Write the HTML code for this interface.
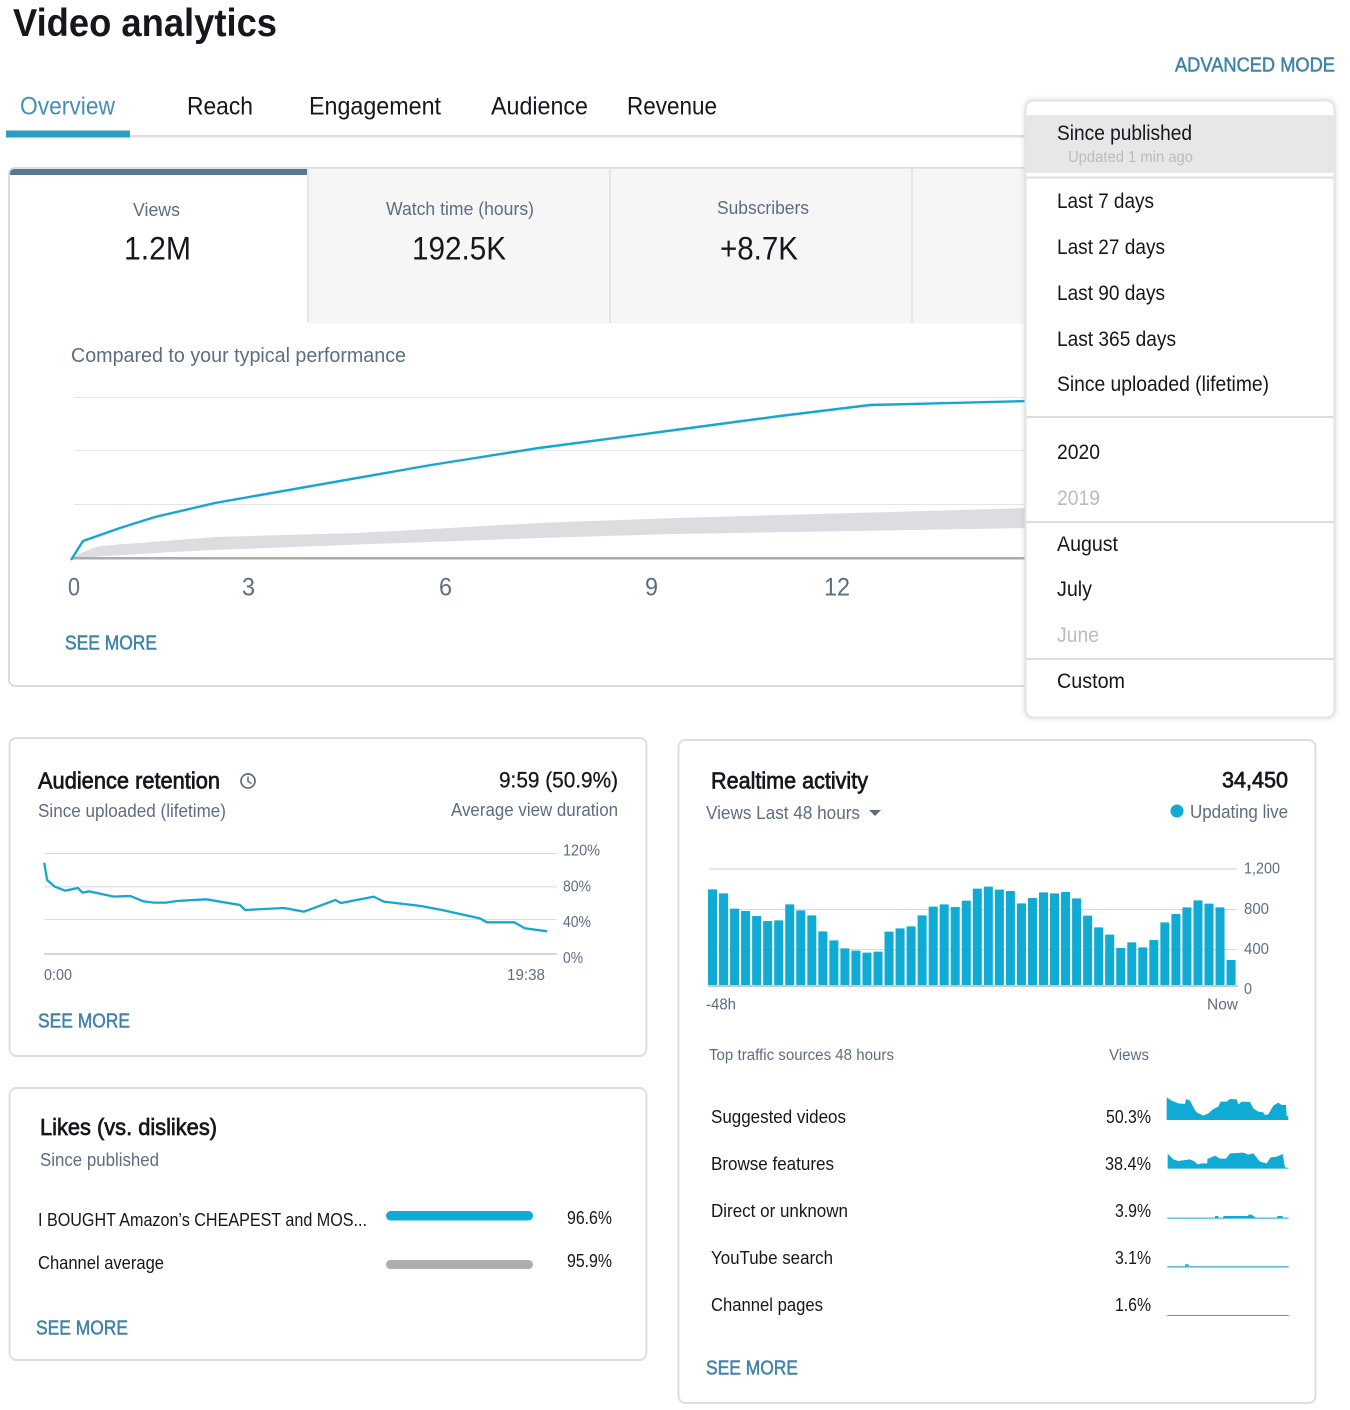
<!DOCTYPE html>
<html lang="en"><head><meta charset="utf-8"><title>Video analytics</title>
<style>
html,body{margin:0;padding:0;background:#fff;width:1350px;height:1410px;overflow:hidden}
svg{display:block;position:absolute;left:0;top:0}
text{font-family:"Liberation Sans",sans-serif}
.g{fill:#5e6c82}.d{fill:#15171c}.l{fill:#bbbcbe}
.a{fill:#3f83a8;stroke:#3f83a8;stroke-width:.5px}
.t{fill:#15171c;stroke:#15171c;stroke-width:.7px}
</style></head><body>
<svg width="1350" height="1410" viewBox="0 0 1350 1410" xmlns="http://www.w3.org/2000/svg">
<defs><filter id="s" x="-5%" y="-5%" width="110%" height="110%"><feGaussianBlur stdDeviation="3"/></filter></defs>
<text x="13" y="36" font-size="39" font-weight="bold" fill="#15171c" textLength="264" lengthAdjust="spacingAndGlyphs">Video analytics</text>
<text class="a" x="1175" y="71.500" font-size="20" textLength="160" lengthAdjust="spacingAndGlyphs">ADVANCED MODE</text>

<rect x="6" y="135" width="1020" height="2.5" fill="#dcdee0"/>
<rect x="6" y="130.500" width="124" height="7" fill="#2f9cc2"/>
<text x="20" y="114.500" font-size="25" fill="#4390b4" textLength="95" lengthAdjust="spacingAndGlyphs">Overview</text>
<text class="d" x="187" y="114.500" font-size="25" textLength="66" lengthAdjust="spacingAndGlyphs">Reach</text>
<text class="d" x="309" y="114.500" font-size="25" textLength="132" lengthAdjust="spacingAndGlyphs">Engagement</text>
<text class="d" x="491" y="114.500" font-size="25" textLength="97" lengthAdjust="spacingAndGlyphs">Audience</text>
<text class="d" x="627" y="114.500" font-size="25" textLength="90" lengthAdjust="spacingAndGlyphs">Revenue</text>

<!-- main card -->
<rect x="9" y="168" width="1040" height="518" rx="6" fill="#fff" stroke="#cfd1d3" stroke-width="1.500"/>
<rect x="308" y="168.500" width="730" height="155" fill="#f6f6f6"/>
<rect x="307" y="168" width="2" height="155" fill="#e6e7e8"/>
<rect x="609" y="168" width="2" height="155" fill="#e3e4e5"/>
<rect x="911" y="168" width="2" height="155" fill="#e3e4e5"/>
<path d="M10 175V174Q10 169 15 169H307V175Z" fill="#56788f"/>
<text class="g" x="133" y="216" font-size="18" textLength="47" lengthAdjust="spacingAndGlyphs">Views</text>
<text class="d" x="124" y="259.500" font-size="32" textLength="67" lengthAdjust="spacingAndGlyphs">1.2M</text>
<text class="g" x="386" y="215" font-size="18" textLength="148" lengthAdjust="spacingAndGlyphs">Watch time (hours)</text>
<text class="d" x="412" y="259.500" font-size="32" textLength="94" lengthAdjust="spacingAndGlyphs">192.5K</text>
<text class="g" x="717" y="214" font-size="18" textLength="92" lengthAdjust="spacingAndGlyphs">Subscribers</text>
<text class="d" x="720" y="259.500" font-size="32" textLength="78" lengthAdjust="spacingAndGlyphs">+8.7K</text>
<text class="g" x="71" y="362" font-size="20" textLength="335" lengthAdjust="spacingAndGlyphs">Compared to your typical performance</text>
<rect x="74" y="397" width="960" height="1" fill="#e4e5e6"/>
<rect x="74" y="450" width="960" height="1" fill="#e6e7e8"/>
<rect x="74" y="504" width="960" height="1" fill="#e4e5e6"/>
<path d="M72 558Q85 550 100 546L215 537 358 533 539 523 675 518 1030 508V528L675 534 539 538 345 545 215 550 172 552 90 557Z" fill="#dcdde0"/>
<rect x="72" y="557" width="960" height="2.500" fill="#a9abad"/>
<polyline points="71,560 83,541 120,528 155,517 215,503 431,465 539,448 675,430 780,416 870,405 1030,401" fill="none" stroke="#16a6d1" stroke-width="2.400"/>
<text class="g" x="68" y="595.500" font-size="25" textLength="12" lengthAdjust="spacingAndGlyphs">0</text>
<text class="g" x="242" y="595.500" font-size="25" textLength="13" lengthAdjust="spacingAndGlyphs">3</text>
<text class="g" x="439" y="595.500" font-size="25" textLength="13" lengthAdjust="spacingAndGlyphs">6</text>
<text class="g" x="645" y="595.500" font-size="25" textLength="13" lengthAdjust="spacingAndGlyphs">9</text>
<text class="g" x="824" y="595.500" font-size="25" textLength="26" lengthAdjust="spacingAndGlyphs">12</text>
<text class="a" x="65" y="649.500" font-size="20" textLength="92" lengthAdjust="spacingAndGlyphs">SEE MORE</text>

<!-- dropdown -->
<rect x="1025" y="100" width="310" height="618" rx="8" fill="#9a9da0" opacity=".45" filter="url(#s)"/>
<rect x="1025.500" y="100.500" width="309" height="617" rx="8" fill="#fff" stroke="#e2e4e6" stroke-width="2"/>
<rect x="1026" y="115" width="308" height="58" fill="#e6e7e9"/>
<rect x="1026" y="176.500" width="308" height="2" fill="#dcdfe2"/>
<rect x="1026" y="416" width="308" height="2" fill="#dcdfe2"/>
<rect x="1026" y="521" width="308" height="2" fill="#dcdfe2"/>
<rect x="1026" y="658" width="308" height="2" fill="#dcdfe2"/>
<text class="d" x="1057" y="140" font-size="21" textLength="135" lengthAdjust="spacingAndGlyphs">Since published</text>
<text class="l" x="1068" y="162" font-size="16" textLength="125" lengthAdjust="spacingAndGlyphs">Updated 1 min ago</text>
<text class="d" x="1057" y="208" font-size="21" textLength="97" lengthAdjust="spacingAndGlyphs">Last 7 days</text>
<text class="d" x="1057" y="254" font-size="21" textLength="108" lengthAdjust="spacingAndGlyphs">Last 27 days</text>
<text class="d" x="1057" y="300" font-size="21" textLength="108" lengthAdjust="spacingAndGlyphs">Last 90 days</text>
<text class="d" x="1057" y="346" font-size="21" textLength="119" lengthAdjust="spacingAndGlyphs">Last 365 days</text>
<text class="d" x="1057" y="391" font-size="21" textLength="212" lengthAdjust="spacingAndGlyphs">Since uploaded (lifetime)</text>
<text class="d" x="1057" y="459" font-size="21" textLength="43" lengthAdjust="spacingAndGlyphs">2020</text>
<text class="l" x="1057" y="505" font-size="21" textLength="43" lengthAdjust="spacingAndGlyphs">2019</text>
<text class="d" x="1057" y="551" font-size="21" textLength="61" lengthAdjust="spacingAndGlyphs">August</text>
<text class="d" x="1057" y="596" font-size="21" textLength="35" lengthAdjust="spacingAndGlyphs">July</text>
<text class="l" x="1057" y="642" font-size="21" textLength="42" lengthAdjust="spacingAndGlyphs">June</text>
<text class="d" x="1057" y="688" font-size="21" textLength="68" lengthAdjust="spacingAndGlyphs">Custom</text>

<!-- retention -->
<rect x="9.500" y="738" width="637" height="318" rx="7" fill="#fff" stroke="#dcdee0" stroke-width="2"/>
<text class="t" x="38" y="788.500" font-size="23" textLength="182" lengthAdjust="spacingAndGlyphs">Audience retention</text>
<circle cx="248" cy="781" r="7" fill="none" stroke="#5e6c82" stroke-width="1.700"/>
<path d="M248 776.500V781.500L251.500 783.500" fill="none" stroke="#5e6c82" stroke-width="1.500"/>
<text class="d" stroke="#15171c" stroke-width=".3" x="499" y="787.500" font-size="22" textLength="119" lengthAdjust="spacingAndGlyphs">9:59 (50.9%)</text>
<text class="g" x="38" y="817" font-size="18" textLength="188" lengthAdjust="spacingAndGlyphs">Since uploaded (lifetime)</text>
<text class="g" x="451" y="816" font-size="18" textLength="167" lengthAdjust="spacingAndGlyphs">Average view duration</text>
<rect x="44" y="853" width="513" height="1" fill="#dcdddf"/>
<rect x="44" y="886" width="513" height="1.500" fill="#e4e5e6"/>
<rect x="44" y="919" width="513" height="1" fill="#dcdddf"/>
<rect x="44" y="953" width="513" height="2" fill="#d5d7d9"/>
<g transform="translate(0,730) scale(.4209,.3333)"><polyline vector-effect="non-scaling-stroke" points="105,398 112,450 130,470 155,482 185,474 196,488 212,484 270,500 310,498 340,514 365,518 395,518 420,513 460,510 490,508 570,525 582,540 675,534 722,545 797,510 810,519 888,500 912,515 1000,528 1050,540 1140,565 1157,577 1222,577 1247,595 1300,604" fill="none" stroke="#16a6d1" stroke-width="2.300"/></g>
<text class="g" x="563" y="855.500" font-size="16" textLength="37" lengthAdjust="spacingAndGlyphs">120%</text>
<text class="g" x="563" y="891.500" font-size="16" textLength="28" lengthAdjust="spacingAndGlyphs">80%</text>
<text class="g" x="563" y="927" font-size="16" textLength="28" lengthAdjust="spacingAndGlyphs">40%</text>
<text class="g" x="563" y="963" font-size="16" textLength="20" lengthAdjust="spacingAndGlyphs">0%</text>
<text class="g" x="44" y="980" font-size="16" textLength="28" lengthAdjust="spacingAndGlyphs">0:00</text>
<text class="g" x="507" y="980" font-size="16" textLength="38" lengthAdjust="spacingAndGlyphs">19:38</text>
<text class="a" x="38" y="1027.500" font-size="20" textLength="92" lengthAdjust="spacingAndGlyphs">SEE MORE</text>

<!-- likes -->
<rect x="9.500" y="1088" width="637" height="272" rx="7" fill="#fff" stroke="#dcdee0" stroke-width="2"/>
<text class="t" x="40" y="1135" font-size="23" textLength="177" lengthAdjust="spacingAndGlyphs">Likes (vs. dislikes)</text>
<text class="g" x="40" y="1166" font-size="18" textLength="119" lengthAdjust="spacingAndGlyphs">Since published</text>
<text class="d" x="38" y="1226" font-size="18" textLength="329" lengthAdjust="spacingAndGlyphs">I BOUGHT Amazon’s CHEAPEST and MOS...</text>
<text class="d" x="38" y="1269" font-size="18" textLength="126" lengthAdjust="spacingAndGlyphs">Channel average</text>
<rect x="386" y="1211" width="147" height="9.500" rx="4.700" fill="#10abd4"/>
<rect x="386" y="1260" width="147" height="9" rx="4.500" fill="#adaeb0"/>
<text class="d" x="567" y="1224" font-size="18" textLength="45" lengthAdjust="spacingAndGlyphs">96.6%</text>
<text class="d" x="567" y="1267" font-size="18" textLength="45" lengthAdjust="spacingAndGlyphs">95.9%</text>
<text class="a" x="36" y="1334.500" font-size="20" textLength="92" lengthAdjust="spacingAndGlyphs">SEE MORE</text>

<!-- realtime -->
<rect x="678.500" y="740" width="637" height="663" rx="7" fill="#fff" stroke="#dcdee0" stroke-width="2"/>
<text class="t" x="711" y="788.500" font-size="23" textLength="157" lengthAdjust="spacingAndGlyphs">Realtime activity</text>
<text class="t" x="1222" y="787.500" font-size="22" textLength="66" lengthAdjust="spacingAndGlyphs">34,450</text>
<text class="g" x="706" y="819" font-size="18" textLength="154" lengthAdjust="spacingAndGlyphs">Views Last 48 hours</text>
<path d="M869 810H881L875 816Z" fill="#5e6c82"/>
<circle cx="1177" cy="811" r="6.500" fill="#10abd4"/>
<text class="g" x="1190" y="818" font-size="18" textLength="98" lengthAdjust="spacingAndGlyphs">Updating live</text>
<rect x="709" y="868" width="528" height="2" fill="#e6e7e8"/>
<rect x="709" y="909" width="528" height="1" fill="#d8d9db"/>
<rect x="709" y="949" width="528" height="1" fill="#d8d9db"/>
<rect x="708" y="985" width="530" height="2" fill="#c8cacc"/>
<g transform="translate(708,850) scale(1.003,.3333)" fill="#0fabd4">
<rect x="0" y="118" width="9" height="287" rx="1"/><rect x="11" y="130" width="9" height="275" rx="1"/><rect x="22" y="176" width="9" height="229" rx="1"/><rect x="33" y="183" width="9" height="222" rx="1"/><rect x="44" y="198" width="9" height="207" rx="1"/><rect x="55" y="213" width="9" height="192" rx="1"/><rect x="66" y="211" width="9" height="194" rx="1"/><rect x="77" y="163" width="9" height="242" rx="1"/><rect x="88" y="181" width="9" height="224" rx="1"/><rect x="99" y="196" width="9" height="209" rx="1"/><rect x="110" y="244" width="9" height="161" rx="1"/><rect x="121" y="271" width="9" height="134" rx="1"/>
<rect x="132" y="295" width="9" height="110" rx="1"/><rect x="143" y="302" width="9" height="103" rx="1"/><rect x="154" y="308" width="9" height="97" rx="1"/><rect x="165" y="305" width="9" height="100" rx="1"/><rect x="176" y="245" width="9" height="160" rx="1"/><rect x="187" y="235" width="9" height="170" rx="1"/><rect x="198" y="229" width="9" height="176" rx="1"/><rect x="209" y="196" width="9" height="209" rx="1"/><rect x="220" y="170" width="9" height="235" rx="1"/><rect x="231" y="163" width="9" height="242" rx="1"/><rect x="242" y="171" width="9" height="234" rx="1"/><rect x="253" y="152" width="9" height="253" rx="1"/>
<rect x="264" y="116" width="9" height="289" rx="1"/><rect x="275" y="110" width="9" height="295" rx="1"/><rect x="286" y="119" width="9" height="286" rx="1"/><rect x="297" y="123" width="9" height="282" rx="1"/><rect x="308" y="160" width="9" height="245" rx="1"/><rect x="319" y="144" width="9" height="261" rx="1"/><rect x="330" y="127" width="9" height="278" rx="1"/><rect x="341" y="130" width="9" height="275" rx="1"/><rect x="352" y="126" width="9" height="279" rx="1"/><rect x="363" y="145" width="9" height="260" rx="1"/><rect x="374" y="197" width="9" height="208" rx="1"/><rect x="385" y="232" width="9" height="173" rx="1"/>
<rect x="396" y="254" width="9" height="151" rx="1"/><rect x="407" y="294" width="9" height="111" rx="1"/><rect x="418" y="277" width="9" height="128" rx="1"/><rect x="429" y="292" width="9" height="113" rx="1"/><rect x="440" y="270" width="9" height="135" rx="1"/><rect x="451" y="217" width="9" height="188" rx="1"/><rect x="462" y="192" width="9" height="213" rx="1"/><rect x="473" y="172" width="9" height="233" rx="1"/><rect x="484" y="151" width="9" height="254" rx="1"/><rect x="495" y="161" width="9" height="244" rx="1"/><rect x="506" y="172" width="9" height="233" rx="1"/><rect x="517" y="330" width="9" height="75" rx="1"/>
</g>
<text class="g" x="1244" y="873.500" font-size="16" textLength="36" lengthAdjust="spacingAndGlyphs">1,200</text>
<text class="g" x="1244" y="914" font-size="16" textLength="25" lengthAdjust="spacingAndGlyphs">800</text>
<text class="g" x="1244" y="954" font-size="16" textLength="25" lengthAdjust="spacingAndGlyphs">400</text>
<text class="g" x="1244" y="994" font-size="16" textLength="8" lengthAdjust="spacingAndGlyphs">0</text>
<text class="g" x="706" y="1009.500" font-size="16" textLength="30" lengthAdjust="spacingAndGlyphs">-48h</text>
<text class="g" x="1207" y="1009.500" font-size="16" textLength="31" lengthAdjust="spacingAndGlyphs">Now</text>
<text class="g" x="709" y="1060" font-size="15.500" textLength="185" lengthAdjust="spacingAndGlyphs">Top traffic sources 48 hours</text>
<text class="g" x="1109" y="1060" font-size="15.500" textLength="40" lengthAdjust="spacingAndGlyphs">Views</text>
<text class="d" x="711" y="1123" font-size="18" textLength="135" lengthAdjust="spacingAndGlyphs">Suggested videos</text>
<text class="d" x="711" y="1170" font-size="18" textLength="123" lengthAdjust="spacingAndGlyphs">Browse features</text>
<text class="d" x="711" y="1217" font-size="18" textLength="137" lengthAdjust="spacingAndGlyphs">Direct or unknown</text>
<text class="d" x="711" y="1264" font-size="18" textLength="122" lengthAdjust="spacingAndGlyphs">YouTube search</text>
<text class="d" x="711" y="1311" font-size="18" textLength="112" lengthAdjust="spacingAndGlyphs">Channel pages</text>
<text class="d" x="1106" y="1123" font-size="18" textLength="45" lengthAdjust="spacingAndGlyphs">50.3%</text>
<text class="d" x="1105" y="1170" font-size="18" textLength="46" lengthAdjust="spacingAndGlyphs">38.4%</text>
<text class="d" x="1115" y="1217" font-size="18" textLength="36" lengthAdjust="spacingAndGlyphs">3.9%</text>
<text class="d" x="1115" y="1264" font-size="18" textLength="36" lengthAdjust="spacingAndGlyphs">3.1%</text>
<text class="d" x="1115" y="1311" font-size="18" textLength="36" lengthAdjust="spacingAndGlyphs">1.6%</text>
<g transform="translate(1090,1080) scale(.3333)">
<polygon fill="#0fabd4" points="230,120 230,52 245,62 265,70 285,72 288,57 300,62 312,85 320,97 340,107 355,100 370,87 385,80 392,65 410,65 420,57 440,58 445,73 455,65 480,66 490,85 505,95 520,97 525,105 535,103 550,77 565,68 575,75 588,75 590,107 595,110 595,120"/>
<polygon fill="#0fabd4" points="233,266 233,221 250,238 265,243 300,238 315,245 322,253 335,250 352,250 352,237 375,227 390,236 408,236 420,220 460,218 475,224 490,220 510,245 530,250 542,232 560,230 578,222 585,262 596,264 596,266"/>
<polygon fill="#0fabd4" points="232,416 232,413 375,413 375,408 385,408 385,413 400,413 400,408 475,408 475,404 485,404 497,413 562,413 562,408 578,408 578,413 596,413 596,416"/>
<rect x="232" y="558" width="364" height="5" fill="#66bcd8"/>
<rect x="285" y="553" width="11" height="6" fill="#0fabd4"/>
<rect x="232" y="705" width="364" height="3" fill="#3fa3c6"/>
</g>
<text class="a" x="706" y="1374.500" font-size="20" textLength="92" lengthAdjust="spacingAndGlyphs">SEE MORE</text>
</svg>
</body></html>
